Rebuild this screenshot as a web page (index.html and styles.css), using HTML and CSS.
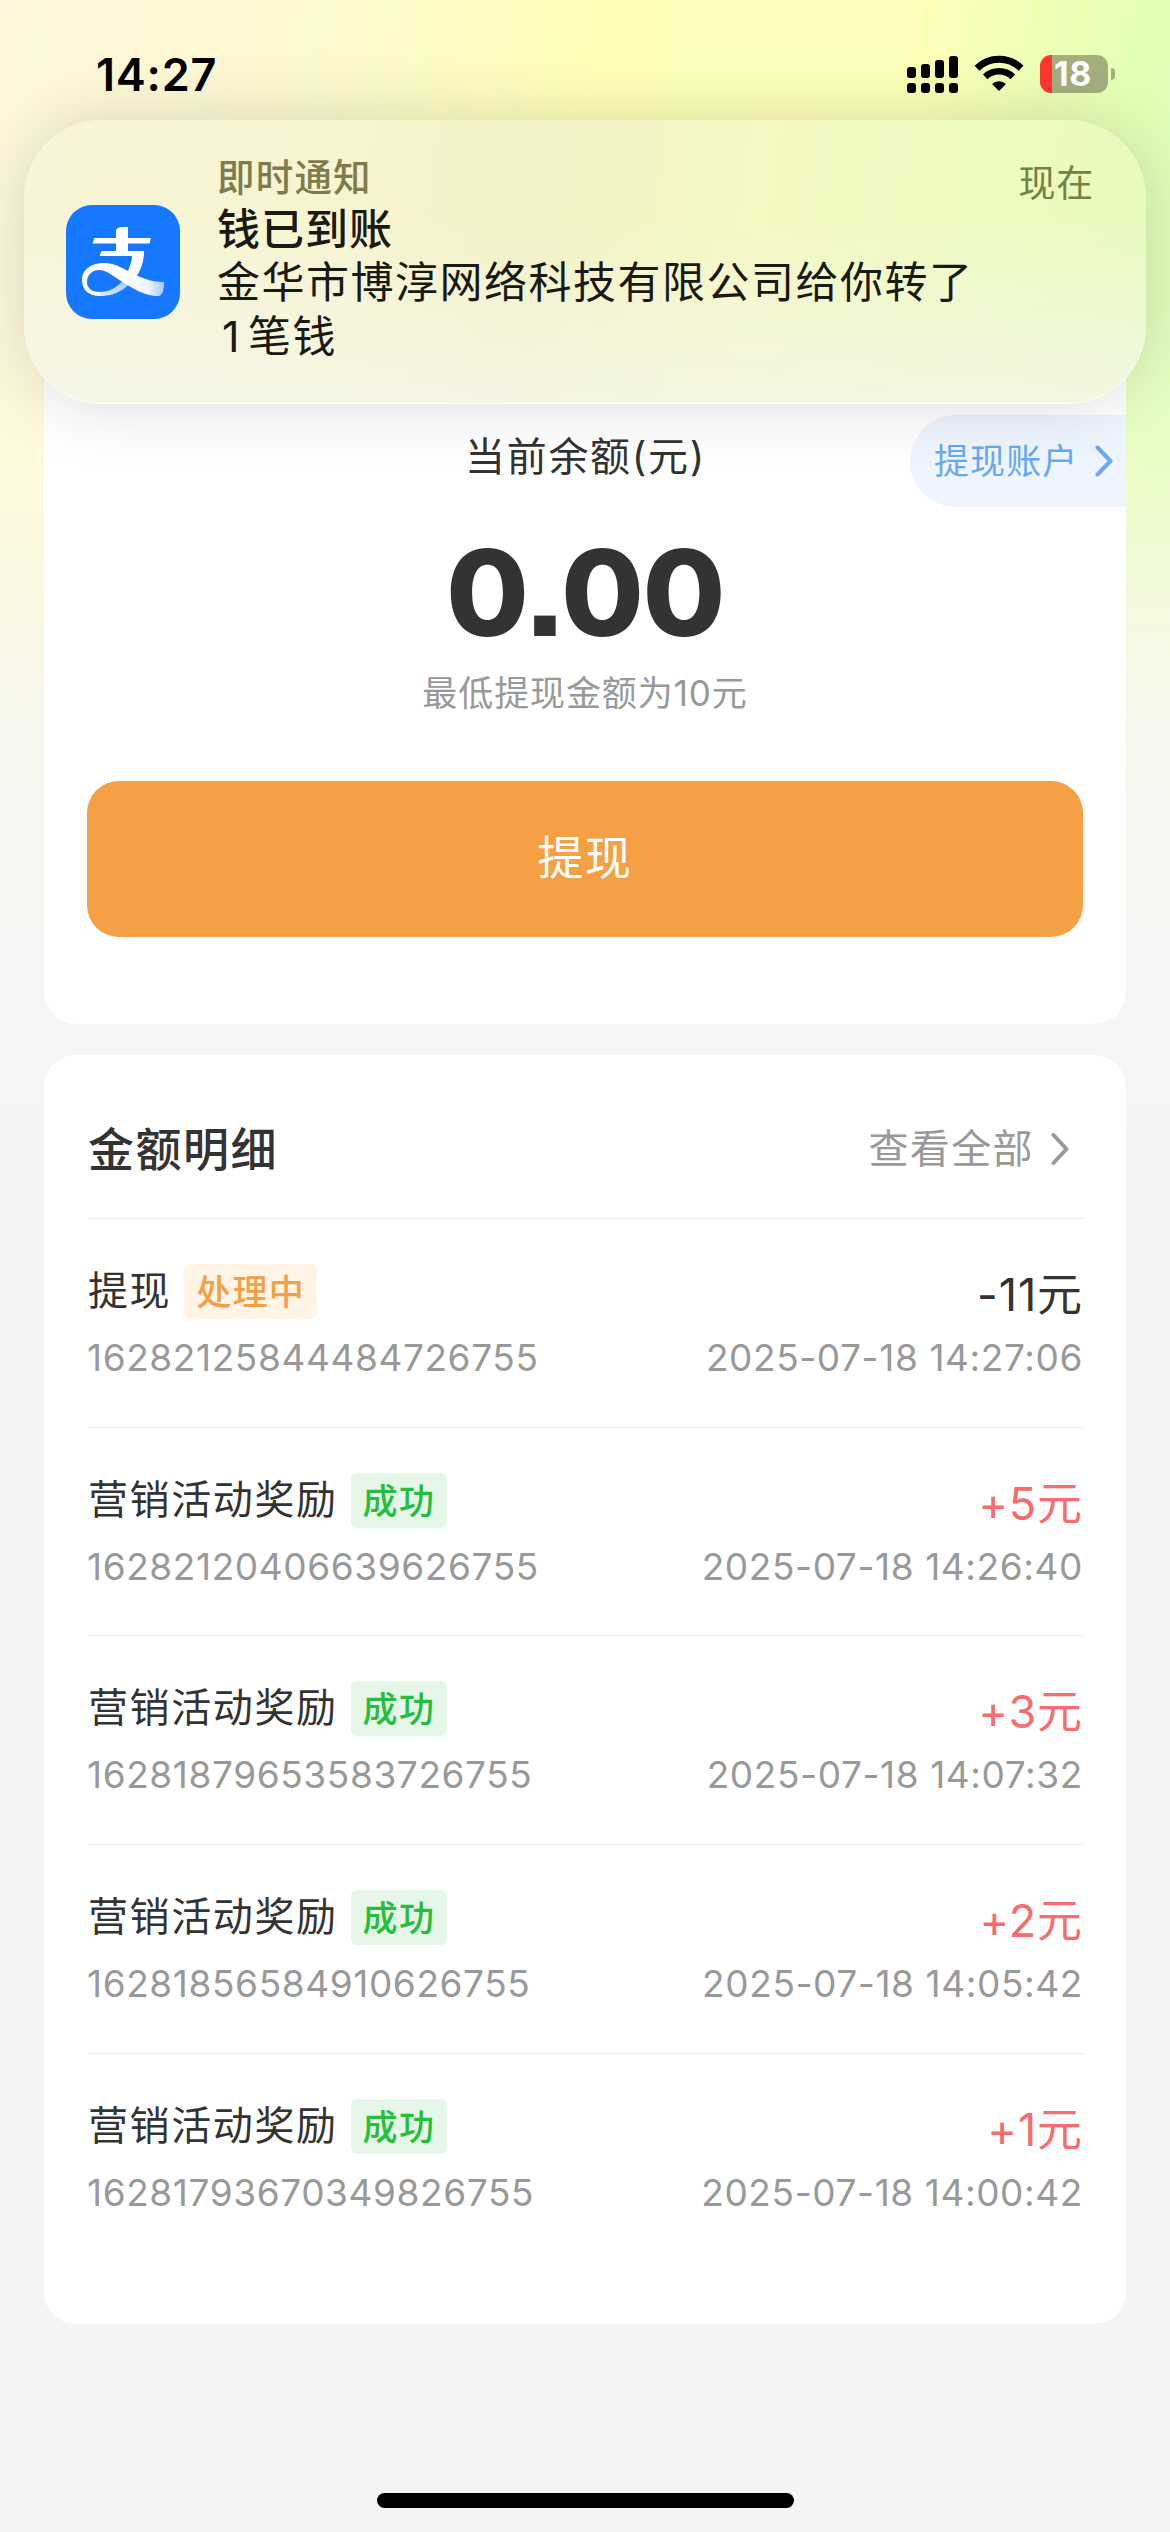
FILE: index.html
```html
<!DOCTYPE html>
<html lang="zh-CN">
<head>
<meta charset="utf-8">
<title>提现</title>
<link rel="stylesheet" href="styles.css">
</head>
<body>
<div class="screen">
  <header class="status">
    <span class="clock">14:27</span>
    <div class="status-icons">
      <svg class="signal" width="51" height="38" viewBox="0 0 51 38">
        <rect x="0" y="12" width="9" height="11" rx="3"/><rect x="14" y="9" width="9" height="14" rx="3"/><rect x="28" y="5" width="9" height="18" rx="3"/><rect x="42" y="1" width="9" height="22" rx="3"/>
        <rect x="0" y="28" width="9" height="10" rx="3"/><rect x="14" y="28" width="9" height="10" rx="3"/><rect x="28" y="28" width="9" height="10" rx="3"/><rect x="42" y="28" width="9" height="10" rx="3"/>
      </svg>
      <svg class="wifi" width="50" height="38" viewBox="0 0 50 38">
        <path d="M3 13.2A31.5 31.5 0 0 1 47 13.2" fill="none" stroke="#000" stroke-width="7"/>
        <path d="M11.2 21.8A20 20 0 0 1 38.8 21.8" fill="none" stroke="#000" stroke-width="6.6"/>
        <path d="M18 29A10 10 0 0 1 32 29L25 36Z"/>
      </svg>
      <div class="battery"><span class="battery-body">18</span><i class="battery-tip"></i></div>
    </div>
  </header>

  <section class="notice">
    <svg class="notice-icon" width="114" height="114" viewBox="0 0 114 114">
      <defs>
        <linearGradient id="tail" x1="0" y1="0" x2="1" y2="0"><stop offset="0.5" stop-color="#fff"/><stop offset="0.8" stop-color="#fff" stop-opacity=".93"/><stop offset="1" stop-color="#fff" stop-opacity=".6"/></linearGradient>
        <linearGradient id="loop" gradientUnits="userSpaceOnUse" x1="72" y1="52" x2="36" y2="92"><stop offset="0" stop-color="#fff"/><stop offset=".3" stop-color="#fff"/><stop offset=".55" stop-color="#fff" stop-opacity=".65"/><stop offset="1" stop-color="#fff" stop-opacity=".85"/></linearGradient>
      </defs>
      <rect width="114" height="114" rx="26" fill="#1677ff"/>
      <path fill="#fff" d="M50 33V26Q50 22 57 22H62V33H85L83.5 38.5H62V46H78V51H33.5L35.5 46H50V38.5H26.5L28.5 33Z"/>
      <path fill="url(#loop)" d="M66 50L78 46C78 62 71 74 60 82C52 89 42 91 34 91L33 87C48 87 57 78 62 66C65 59 66 55 66 50Z"/>
      <path fill="url(#tail)" d="M34 91C23 91 16 85 16 75C16 64 26 58 38 58C58 58 70 77 98 77C98 84 97 91 92 91C76 91 62 80 55 76C45 70 41 65 33 65C26 65 21 70 21 77C21 84 27 87 34 87Z"/>
    </svg>
    <div class="notice-text">
      <div class="notice-kind">即时通知</div>
      <div class="notice-title">钱已到账</div>
      <div class="notice-body">金华市博淳网络科技有限公司给你转了<br><span class="one">1</span>笔钱</div>
    </div>
    <time class="notice-time">现在</time>
  </section>

  <main class="content">
    <section class="card balance">
      <div class="balance-head">
        <span class="balance-label">当前余额(元)</span>
        <a class="account">提现账户<svg width="18" height="32" viewBox="0 0 18 32"><path d="M2.5 2.5L15.5 16L2.5 29.5"/></svg></a>
      </div>
      <div class="balance-value">0.00</div>
      <div class="balance-hint">最低提现金额为10元</div>
      <button class="withdraw">提现</button>
    </section>

    <section class="card details">
      <div class="details-head">
        <h2>金额明细</h2>
        <a class="all">查看全部<svg width="18" height="34" viewBox="0 0 18 34"><path d="M2.5 3L15.5 17L2.5 31"/></svg></a>
      </div>
      <ul class="records">
        <li><div class="line"><span class="name">提现</span><span class="tag pending">处理中</span><span class="amount">-11元</span></div><div class="meta"><span class="rid">16282125844484726755</span><time>2025-07-18 14:27:06</time></div></li>
        <li><div class="line"><span class="name">营销活动奖励</span><span class="tag ok">成功</span><span class="amount in">+5元</span></div><div class="meta"><span class="rid">16282120406639626755</span><time>2025-07-18 14:26:40</time></div></li>
        <li><div class="line"><span class="name">营销活动奖励</span><span class="tag ok">成功</span><span class="amount in">+3元</span></div><div class="meta"><span class="rid">16281879653583726755</span><time>2025-07-18 14:07:32</time></div></li>
        <li><div class="line"><span class="name">营销活动奖励</span><span class="tag ok">成功</span><span class="amount in">+2元</span></div><div class="meta"><span class="rid">16281856584910626755</span><time>2025-07-18 14:05:42</time></div></li>
        <li><div class="line"><span class="name">营销活动奖励</span><span class="tag ok">成功</span><span class="amount in">+1元</span></div><div class="meta"><span class="rid">16281793670349826755</span><time>2025-07-18 14:00:42</time></div></li>
      </ul>
    </section>
  </main>
  <div class="home-bar"></div>
</div>
</body>
</html>
```
FILE: styles.css
```css
* { box-sizing: border-box; margin: 0; padding: 0; }
body {
  width: 1170px;
  font-family: Inter, "Noto Sans CJK SC", sans-serif;
  color: #333;
  background: #f3f4f6;
}
.screen {
  position: relative;
  display: flex;
  flex-direction: column;
  height: 2532px;
  overflow: hidden;
  background:
    linear-gradient(180deg, rgba(252,251,224,0) 120px, rgba(252,252,222,.3) 450px, rgba(249,248,232,.85) 620px, #f7f7ef 740px, #f5f6f2 880px, #f5f5f5 1010px, #f5f5f5 1100px, #f3f4f6 1132px),
    linear-gradient(97deg, #fff8dc 0, #fdf9cf 320px, #ffffb8 600px, #feffb8 920px, #e4ffb6 1130px, #deffb8 1200px);
}

.status {
  display: flex;
  justify-content: space-between;
  height: 120px;
  padding: 55px 55px 0 96px;
}
.clock { height: 38px; font-size: 45px; font-weight: 600; line-height: 39px; letter-spacing: .8px; color: #000; }
.status-icons { display: flex; height: 38px; }
.wifi { margin-left: 16px; }
.battery { display: flex; align-items: center; gap: 3px; margin-left: 16px; }
.battery-body {
  width: 68px; height: 38px; padding-left: 14px;
  border-radius: 11px;
  background: linear-gradient(90deg, #ff3830 12px, #a4ae7f 12px);
  color: #fff; font-size: 34px; font-weight: 700; line-height: 38px; letter-spacing: .5px;
}
.battery-tip { width: 4px; height: 12px; border-radius: 0 6px 6px 0; background: #a4ae7f; }

.notice {
  position: absolute;
  z-index: 2;
  top: 120px; left: 24px;
  display: flex;
  width: 1122px; height: 284px;
  padding: 33px 52px 0 42px;
  border-radius: 78px;
  background:
    linear-gradient(180deg, rgba(245,246,238,0) 35%, rgba(245,246,235,.8) 100%),
    linear-gradient(97deg, #f8f5d8 0, #f7f4cf 350px, #f3f1c6 530px, #f5f8c2 720px, #ecfbc0 1000px, #e7fabe 1150px);
  box-shadow: 0 0 70px rgba(0,0,0,.15), inset 0 -1px 1px rgba(255,255,255,.8);
}
.notice-icon { margin-top: 52px; }
.notice-text { flex: 1; margin-left: 37px; color: #1a1a14; }
.notice-kind { height: 49px; font-size: 37.5px; font-weight: 500; line-height: 49px; letter-spacing: 1.2px; color: #7f7b50; }
.notice-title { height: 53px; font-size: 43px; font-weight: 500; line-height: 55px; letter-spacing: 1px; }
.notice-body { font-size: 43px; line-height: 54px; letter-spacing: 1.5px; white-space: nowrap; }
.one { margin: 0 7px 0 5px; }
.notice-time { height: 60px; font-size: 37px; line-height: 62px; letter-spacing: .8px; color: #76813f; }

.content { display: flex; flex-direction: column; gap: 31px; padding: 200px 44px 0; }
.card { border-radius: 32px; background: #fff; }
.balance { display: flex; flex-direction: column; align-items: center; height: 704px; padding-top: 95px; }
.balance-head { display: flex; justify-content: space-between; align-self: stretch; height: 92px; padding-left: 421px; }
.balance-label { font-size: 40px; line-height: 83px; letter-spacing: 1.7px; }
.account {
  display: flex; align-items: center; gap: 17px;
  width: 216px; height: 92px; padding-left: 24px;
  border-radius: 46px 0 0 46px;
  background: #eef5ff;
  color: #6aa8f4; font-size: 35px; line-height: 50px; letter-spacing: 1.1px; white-space: nowrap;
}
.account svg, .all svg { fill: none; stroke: currentColor; stroke-width: 4; stroke-linecap: round; stroke-linejoin: round; }
.balance-value { height: 160px; font-size: 120px; font-weight: 800; line-height: 172px; letter-spacing: -1.5px; font-feature-settings: "ss07"; }
.balance-hint { height: 50px; font-size: 35px; line-height: 53px; letter-spacing: .9px; color: #999; }
.withdraw {
  width: 996px; height: 156px; margin-top: 64px;
  border: 0; border-radius: 32px; background: #f5a045;
  color: #fff; font: 46px/153px Inter, "Noto Sans CJK SC", sans-serif; letter-spacing: 1.5px;
  padding-bottom: 3px;
}

.details { height: 1269px; padding: 0 42px 0 44px; }
.details-head { display: flex; align-items: center; justify-content: space-between; height: 163px; padding: 25px 15px 0 0; }
h2 { font-size: 46px; font-weight: 500; line-height: 60px; letter-spacing: 1.5px; }
.all { display: flex; align-items: center; gap: 17px; color: #999; font-size: 40px; line-height: 60px; letter-spacing: 1.4px; }
.records { list-style: none; }
.records li { height: 208.7px; padding-top: 45px; border-top: 1px solid #eee; }
.line { display: flex; height: 56px; }
.name { font-size: 40px; line-height: 54px; letter-spacing: 1.6px; }
.tag { height: 55px; margin-left: 13px; padding: 0 12px; border-radius: 6px; font-size: 35px; font-weight: 500; line-height: 57px; letter-spacing: 1.3px; }
.pending { background: #fff4e5; color: #f5a045; }
.ok { background: #e6f7e9; color: #26bf3a; }
.amount { margin-left: auto; padding-right: 1px; font-size: 45px; line-height: 62px; letter-spacing: .9px; }
.in { color: #f76d6d; }
.meta { display: flex; justify-content: space-between; height: 56px; padding-right: 1px; font-size: 37px; line-height: 76px; letter-spacing: .6px; color: #999; }
.rid { margin-left: -1px; }
.home-bar { width: 417px; height: 15px; margin: 169px auto 0; border-radius: 8px; background: #000; }
```
